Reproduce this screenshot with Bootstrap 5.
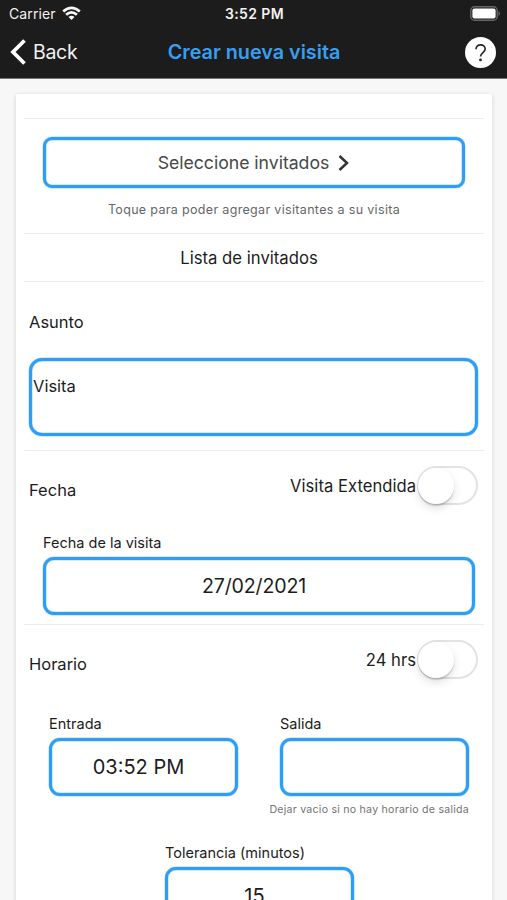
<!DOCTYPE html>
<html lang="es">
<head>
<meta charset="utf-8">
<meta name="viewport" content="width=device-width, initial-scale=1">
<title>Crear nueva visita</title>
<link href="https://cdn.jsdelivr.net/npm/bootstrap@5.3.0/dist/css/bootstrap.min.css" rel="stylesheet">
<style>
  body { font-family: Inter, "Liberation Sans", sans-serif; background: #f7f7f7; color: #1c1c1c; height: 900px; overflow: hidden; font-size: 16.5px; line-height: 20px; white-space: nowrap; }
  .app-head { background: #1c1c1c; height: 79px; border-bottom: 1px solid #777; color: #f2f2f2; }
  .status-bar { height: 27px; padding: 0 7px 0 9px; display: grid; grid-template-columns: 1fr auto 1fr; font-size: 14px; }
  .carrier { letter-spacing: .1px; margin-right: 6px; }
  .clock { font-weight: 600; font-size: 14px; letter-spacing: .4px; }
  .title-bar { height: 49px; padding: 0 11px 0 12px; display: grid; grid-template-columns: 1fr auto 1fr; }
  .back-link { font-size: 19.5px; gap: 6px; letter-spacing: -.3px; margin-left: -2px; }
  .screen-title { color: #379ff0; font-size: 19.8px; font-weight: 600; }
  .help-dot { width: 31px; height: 31px; margin-top: 2px; }
  .sheet { width: 476px; height: 840px; margin: 15px 15px 0 16px; padding: 0 8px; box-shadow: 0 1px 4px rgba(0,0,0,.16); border-radius: 2px; }
  .block { border-bottom: 1.5px solid #ececec; }
  .block-top { height: 25px; }
  .block-pick { height: 115px; padding: 18px 19px 0; }
  .block-list { height: 48px; padding: 0 10px 0 0; }
  .block-subject { height: 169px; padding: 30px 6px 0 5px; }
  .block-date { height: 174px; padding: 15px 6px 0 5px; }
  .block-time { padding: 15px 6px 0 5px; }
  .field { border: 3px solid #2d9ef5; border-radius: 11px; background: #fff; box-shadow: 0 0 0 .5px rgba(45,158,245,.4), inset 0 0 0 .5px rgba(45,158,245,.4); }
  .pick-btn { height: 51px; color: #484848; font-size: 17.7px; border-radius: 9px; }
  .t-pick { letter-spacing: -.04px; }
  .hint { color: #666; font-size: 12.5px; letter-spacing: .33px; }
  .hint-line { margin-top: 10px; }
  .t-list { font-size: 16.7px; }
  .subject-box { height: 78px; margin-top: 26px; padding: 15px 0 0 1px; border-radius: 13px; }
  .tall { height: 58px; font-size: 20px; margin-top: 5px; }
  .nudge { padding-right: 10px; }
  .t-dmy { font-size: 19.6px; letter-spacing: -.18px; }
  .row-head { height: 39px; }
  .row-label { padding-top: 8px; }
  .row-option { font-size: 16.6px; margin-right: 1px; letter-spacing: .03px; }
  .cap { font-size: 14.5px; height: 20px; padding-top: 1px; }
  .toggle { width: 61px; height: 39px; border: 2px solid #e3e3e3; border-radius: 20px; background: #fff; }
  .knob { width: 36px; height: 36px; margin-left: -1px; background: #fff; border-radius: 50%; box-shadow: 0 4px 9px rgba(0,0,0,.13), 0 2px 1px rgba(0,0,0,.15); }
  .date-group { margin: 27px 3px 0 14px; }
  .time-group { margin: 34px 9px 0 20px; }
  .w-time { width: 189px; }
  .tolerance { padding-top: 22px; margin-left: 136px; }
  .hint-sm { color: #737373; font-size: 10.6px; letter-spacing: .24px; }
</style>
</head>
<body>
<header class="app-head">
  <div class="status-bar align-items-center">
    <div class="d-flex align-items-center"><span class="carrier">Carrier</span>
      <svg width="19" height="15" viewBox="0 0 19 15" fill="none" stroke="#f5f5f5" stroke-width="2.7"><path d="M1.200 5.600Q9.500-2 17.800 5.600M4.100 8.800Q9.500 3.800 14.900 8.800"/><path d="M9.500 14 6.500 11Q9.500 8.400 12.500 11Z" fill="#f5f5f5" stroke="none"/></svg>
    </div>
    <span class="clock">3:52 PM</span>
    <svg class="ms-auto" width="30" height="15" viewBox="0 0 30 15"><rect x=".8" y=".8" width="26.400" height="13.400" rx="3.800" fill="none" stroke="#666" stroke-width="1.400"/><rect x="2.400" y="2.400" width="23.200" height="10.200" rx="2" fill="#fff"/><path d="M28.500 5v5Q30 9 30 7.500T28.500 5" fill="#666"/></svg>
  </div>
  <div class="title-bar align-items-center">
    <div class="back-link d-flex align-items-center">
      <svg width="17" height="26" viewBox="0 0 17 26" fill="none" stroke="#fff" stroke-width="3.800"><path d="M14.500 1.500 3 13l11.500 11.500"/></svg><span>Back</span>
    </div>
    <span class="screen-title">Crear nueva visita</span>
    <svg class="help-dot ms-auto" viewBox="0 0 31 31"><circle cx="15.500" cy="15.500" r="15.500" fill="#fff"/><path d="M11 12.300C11 6.400 20.200 6.400 20.200 12.100c0 3.200-4.700 3.700-4.700 7.300" fill="none" stroke="#222" stroke-width="1.600"/><circle cx="15.500" cy="22.900" r="1.400" fill="#222"/></svg>
  </div>
</header>
<main class="sheet bg-white">
  <div class="block block-top"></div>
  <section class="block block-pick">
    <div class="field pick-btn d-flex align-items-center justify-content-center">
      <span class="t-pick">Seleccione invitados</span>
      <svg class="ms-2" width="13" height="18" viewBox="0 0 13 18" fill="none" stroke="#333" stroke-width="2.500"><path d="m2.500 2 7.500 7-7.500 7"/></svg>
    </div>
    <div class="hint-line text-center"><span class="hint">Toque para poder agregar visitantes a su visita</span></div>
  </section>
  <section class="block block-list d-flex align-items-center justify-content-center"><span class="t-list">Lista de invitados</span></section>
  <section class="block block-subject">
    <div>Asunto</div>
    <div class="field subject-box">Visita</div>
  </section>
  <section class="block block-date">
    <div class="row-head d-flex justify-content-between align-items-center">
      <span class="row-label">Fecha</span>
      <div class="d-flex align-items-center"><span class="row-option">Visita Extendida</span><div class="toggle"><div class="knob"></div></div></div>
    </div>
    <div class="date-group">
      <div class="cap">Fecha de la visita</div>
      <div class="field tall nudge d-flex align-items-center justify-content-center"><span class="t-dmy">27/02/2021</span></div>
    </div>
  </section>
  <section class="block-time">
    <div class="row-head d-flex justify-content-between align-items-center">
      <span class="row-label">Horario</span>
      <div class="d-flex align-items-center"><span class="row-option">24 hrs</span><div class="toggle"><div class="knob"></div></div></div>
    </div>
    <div class="time-group d-flex justify-content-between">
      <div class="w-time">
        <div class="cap">Entrada</div>
        <div class="field tall nudge d-flex align-items-center justify-content-center">03:52 PM</div>
      </div>
      <div class="w-time">
        <div class="cap">Salida</div>
        <div class="field tall"></div>
        <div class="d-flex justify-content-end mt-1"><span class="hint-sm">Dejar vacio si no hay horario de salida</span></div>
      </div>
    </div>
    <div class="w-time tolerance">
      <div class="cap">Tolerancia (minutos)</div>
      <div class="field tall nudge d-flex align-items-center justify-content-center">15</div>
    </div>
  </section>
</main>
<script src="https://cdn.jsdelivr.net/npm/bootstrap@5.3.0/dist/js/bootstrap.bundle.min.js"></script>
</body>
</html>
